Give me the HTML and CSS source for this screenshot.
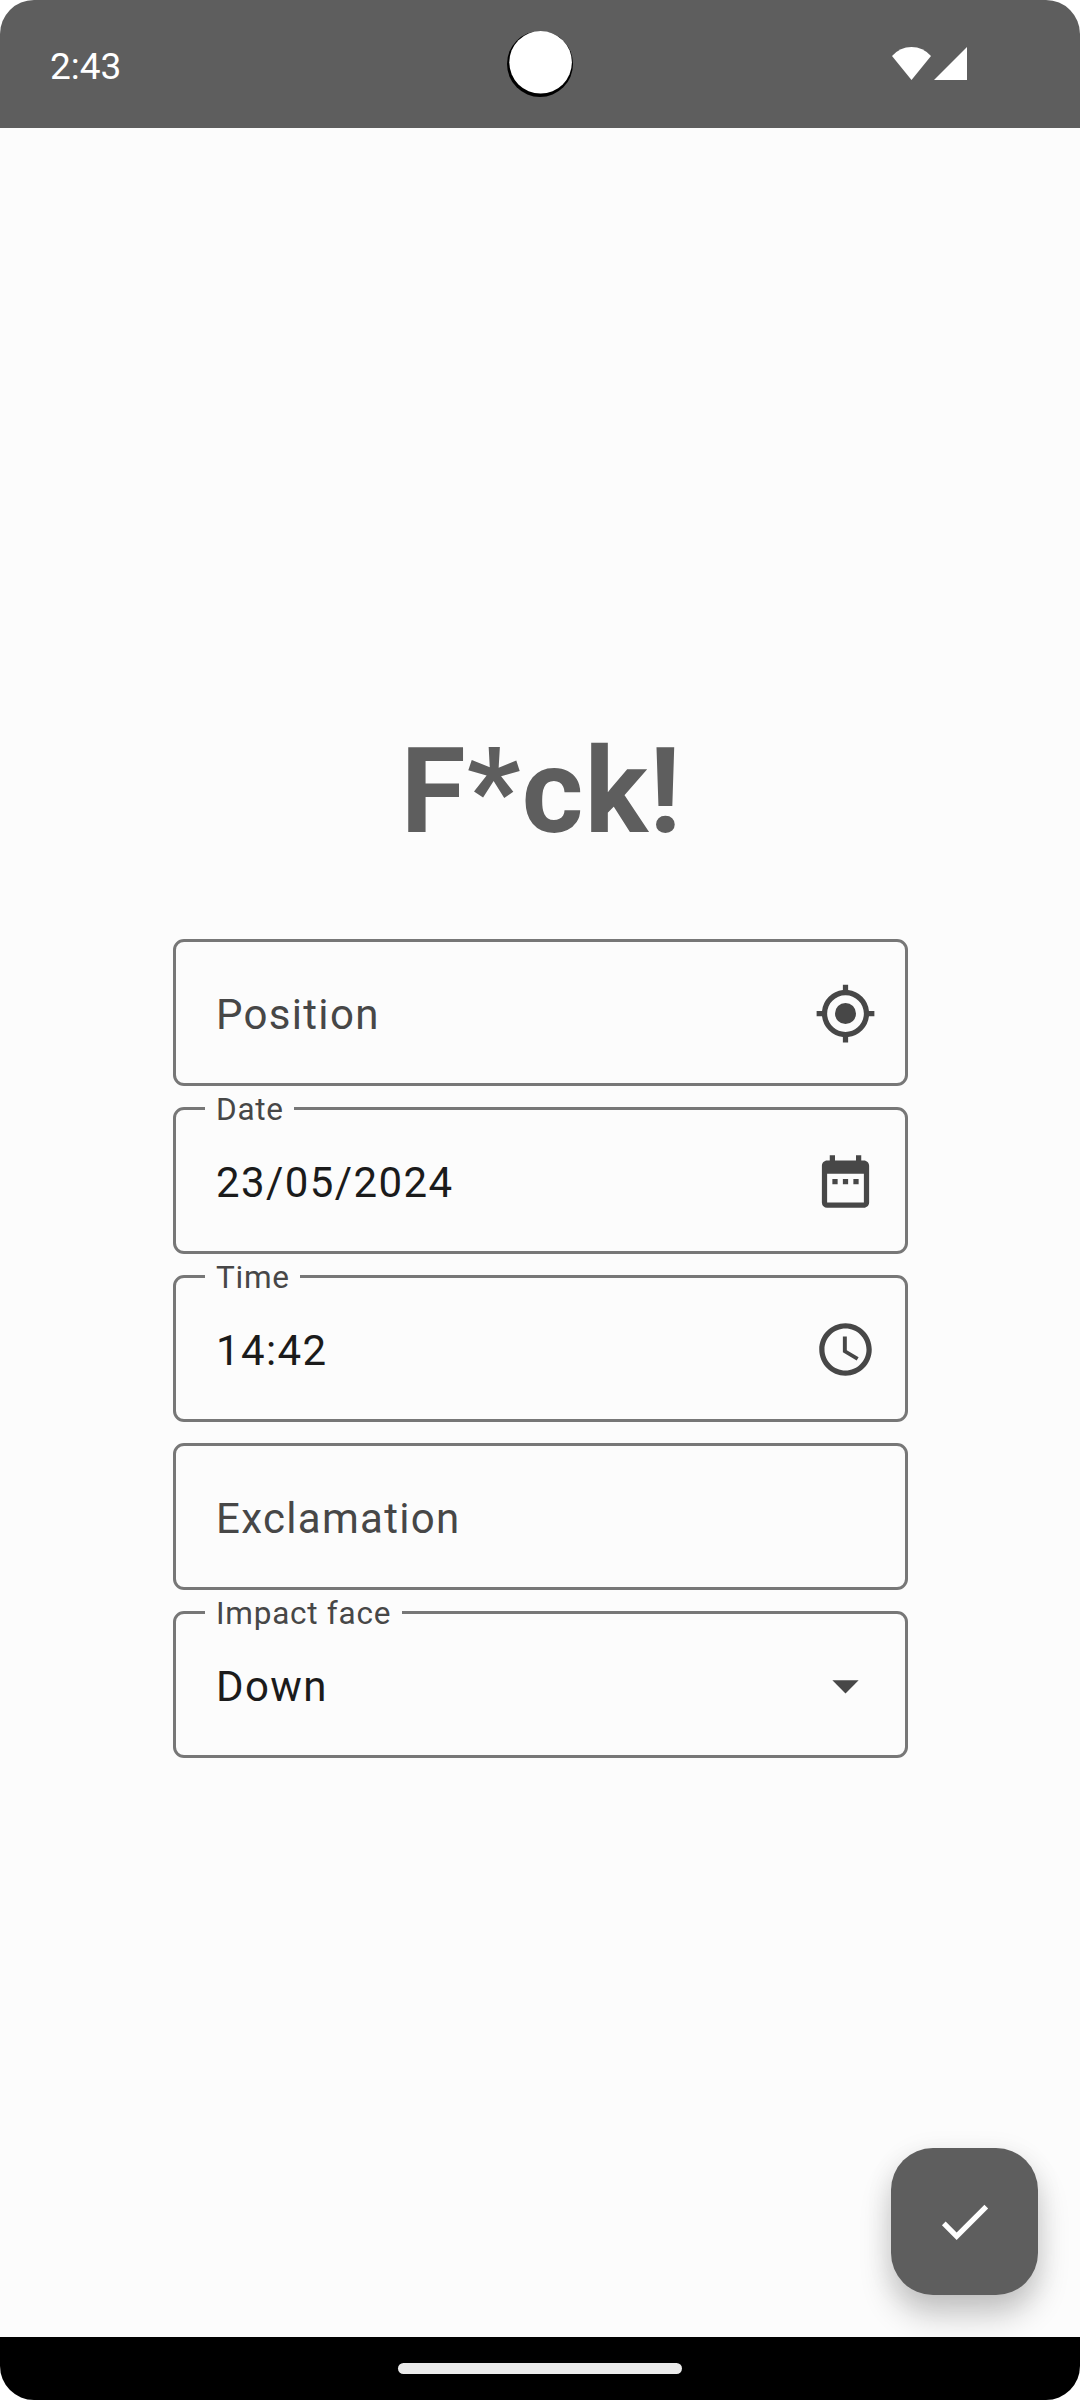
FILE: index.html
```html
<!DOCTYPE html>
<html lang="en">
<head>
<meta charset="utf-8">
<title>F*ck!</title>
<link rel="stylesheet" href="styles.css">
</head>
<body>
<div class="screen">
  <header class="status-bar">
    <span class="status-time">2:43</span>
    <svg class="camera" viewBox="0 0 66 66"><circle cx="33" cy="33" r="33" fill="#000"/><circle cx="33.6" cy="31.3" r="31.3" fill="#fff"/></svg>
    <div class="status-icons">
      <svg width="39" height="33" viewBox="0 0 39 33"><path d="M19.5 33 0 9Q8 0 19.5 0T39 9Z"/></svg>
      <svg width="33" height="33" viewBox="0 0 33 33"><path d="M33 0V33H0Z"/></svg>
    </div>
  </header>
  <main class="content">
    <h1 class="title">F*ck!</h1>
    <form class="form">
      <div class="field">
        <span class="placeholder">Position</span>
        <svg class="icon" viewBox="0 0 24 24"><circle cx="12" cy="12" r="4"/><path d="M20.94 11A8.994 8.994 0 0 0 13 3.060V1h-2v2.060A8.994 8.994 0 0 0 3.060 11H1v2h2.060A8.994 8.994 0 0 0 11 20.940V23h2v-2.060A8.994 8.994 0 0 0 20.940 13H23v-2zM12 19c-3.870 0-7-3.130-7-7s3.130-7 7-7 7 3.130 7 7-3.130 7-7 7z"/></svg>
      </div>
      <div class="field">
        <span class="label">Date</span>
        <span class="value">23/05/2024</span>
        <svg class="icon" viewBox="0 0 24 24"><path d="M9 11H7v2h2zm4 0h-2v2h2zm4 0h-2v2h2zm2-7h-1V2h-2v2H8V2H6v2H5c-1.110 0-1.990.9-1.990 2L3 20a2 2 0 0 0 2 2h14c1.100 0 2-.9 2-2V6c0-1.100-.9-2-2-2zm0 16H5V9h14z"/></svg>
      </div>
      <div class="field">
        <span class="label">Time</span>
        <span class="value">14:42</span>
        <svg class="icon" viewBox="0 0 24 24"><path d="M11.990 2C6.470 2 2 6.480 2 12s4.470 10 9.990 10C17.520 22 22 17.520 22 12S17.520 2 11.990 2zM12 20c-4.420 0-8-3.580-8-8s3.580-8 8-8 8 3.580 8 8-3.580 8-8 8zM12.500 7H11v6l5.250 3.150.75-1.230-4.500-2.670z"/></svg>
      </div>
      <div class="field">
        <span class="placeholder">Exclamation</span>
      </div>
      <div class="field">
        <span class="label">Impact face</span>
        <span class="value">Down</span>
        <svg class="icon" viewBox="0 0 24 24"><path d="M7 10l5 5 5-5z"/></svg>
      </div>
    </form>
    <button class="fab" type="button" aria-label="Confirm">
      <svg class="fab-icon" viewBox="0 0 24 24"><path d="M9 16.170 4.830 12l-1.420 1.410L9 19 21 7l-1.410-1.410z"/></svg>
    </button>
  </main>
  <footer class="nav-bar"><div class="nav-handle"></div></footer>
</div>
</body>
</html>
```
FILE: styles.css
```css
* {
  box-sizing: border-box;
}

body {
  margin: 0;
  background: #fff;
  font-family: Roboto, sans-serif;
}

.screen {
  display: flex;
  flex-direction: column;
  width: 1080px;
  height: 2400px;
  overflow: hidden;
  border-radius: 34px;
  background: #fcfcfc;
}

.status-bar {
  position: relative;
  display: flex;
  justify-content: space-between;
  height: 128px;
  padding: 0 113px 0 50px;
  background: #5e5e5e;
  color: #fff;
}

.status-time {
  padding-top: 45px;
  font-size: 37px;
  line-height: 43px;
}

.camera {
  position: absolute;
  left: 507px;
  top: 31px;
  width: 66px;
  height: 66px;
}

.status-icons {
  display: flex;
  gap: 3px;
  padding-top: 47px;
  fill: #fff;
}

.content {
  position: relative;
  flex: 1;
  display: flex;
  flex-direction: column;
  align-items: center;
  padding-top: 595px;
}

.title {
  margin: 0 0 79px;
  padding-left: 3px;
  color: #5e5e5e;
  font-size: 118.125px;
  font-weight: 700;
  line-height: 137px;
  letter-spacing: 1.312px;
}

.form {
  display: flex;
  flex-direction: column;
  gap: 21px;
  width: 735px;
  margin-left: 1px;
}

.field {
  position: relative;
  display: flex;
  align-items: center;
  justify-content: space-between;
  height: 147px;
  padding: 0 28px 0 40px;
  border: 3px solid #777;
  border-radius: 11px;
  font-size: 42px;
  line-height: 63px;
  letter-spacing: 1.312px;
}

.placeholder,
.value {
  padding-top: 4px;
}

.placeholder {
  color: #474747;
}

.value {
  color: #1b1b1b;
  letter-spacing: 1.400px;
}

.label {
  position: absolute;
  left: 29px;
  top: -21px;
  padding: 0 10.500px 0 11px;
  background: #fcfcfc;
  color: #474747;
  font-size: 31.500px;
  line-height: 42px;
  letter-spacing: 0.750px;
}

.icon {
  width: 63px;
  height: 63px;
  margin-top: 2px;
  fill: #474747;
}

.fab {
  position: absolute;
  right: 42px;
  bottom: 42px;
  display: flex;
  align-items: center;
  justify-content: center;
  width: 147px;
  height: 147px;
  padding: 0;
  border: 0;
  border-radius: 42px;
  background: #5e5e5e;
  box-shadow: 0 21px 32px rgba(0, 0, 0, 0.200), 0 5px 28px rgba(0, 0, 0, 0.080);
}

.fab-icon {
  width: 63px;
  height: 63px;
  fill: #fff;
}

.nav-bar {
  position: relative;
  display: flex;
  justify-content: center;
  height: 63px;
  padding-top: 26px;
  background: #000;
}

.nav-handle {
  width: 284px;
  height: 11px;
  border-radius: 5.500px;
  background: #ebebeb;
}
```
